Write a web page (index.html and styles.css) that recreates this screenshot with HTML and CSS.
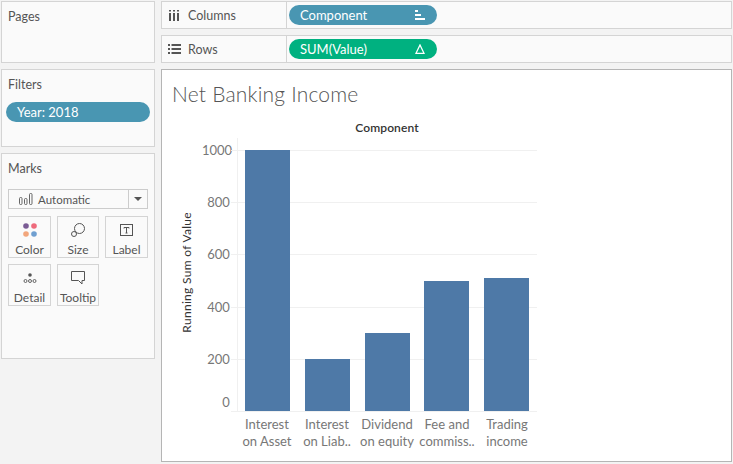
FILE: index.html
```html
<!DOCTYPE html>
<html lang="en">
<head>
    <meta charset="UTF-8">
    <title>Net Banking Income</title>
    <link rel="stylesheet" href="styles.css">
</head>
<body>
    <div class="workspace">
        <aside class="sidebar">
            <section class="card pages-card">
                <h4>Pages</h4>
            </section>
            <section class="card filters-card">
                <h4>Filters</h4>
                <div class="pill pill-blue filter-pill">Year: 2018</div>
            </section>
            <section class="card marks-card">
                <h4>Marks</h4>
                <div class="mark-select">
                    <svg class="mark-icon" width="14" height="12" viewBox="0 0 14 12"><g fill="none" stroke="#666" stroke-width="1"><rect x="0.5" y="4.5" width="2.500" height="7" rx="1"/><rect x="5.500" y="5.500" width="2.500" height="6" rx="1"/><rect x="10.500" y="0.500" width="2.500" height="11" rx="1"/></g></svg>
                    <span class="mark-name">Automatic</span>
                    <span class="mark-arrow"></span>
                </div>
                <div class="mark-grid">
                    <div class="mark-btn">
                        <svg width="14" height="14" viewBox="0 0 14 14"><circle cx="3" cy="3" r="2.800" fill="#7b5c95"/><circle cx="11" cy="3" r="2.800" fill="#ee6a7c"/><circle cx="3" cy="11" r="2.800" fill="#f2a67c"/><circle cx="11" cy="11" r="2.800" fill="#6f9fd0"/></svg>
                        <span>Color</span>
                    </div>
                    <div class="mark-btn">
                        <svg width="14" height="14" viewBox="0 0 14 14"><g fill="none" stroke="#555"><circle cx="8.500" cy="5.500" r="5"/><circle cx="3" cy="11" r="2.500" fill="#fafafa"/></g></svg>
                        <span>Size</span>
                    </div>
                    <div class="mark-btn">
                        <svg width="14" height="14" viewBox="0 0 14 14"><rect x="0.5" y="1.5" width="12" height="11" fill="none" stroke="#555"/><path d="M4 4.5H9M6.5 4.5V10M5.5 10H7.5M4 4.5V5.5M9 4.5V5.5" fill="none" stroke="#555"/></svg>
                        <span>Label</span>
                    </div>
                    <div class="mark-btn">
                        <svg width="14" height="14" viewBox="0 0 14 14"><circle cx="7" cy="4" r="1.800" fill="#555"/><g fill="none" stroke="#555" stroke-width="0.9"><circle cx="2.500" cy="10" r="1.500"/><circle cx="7" cy="10" r="1.500"/><circle cx="11.500" cy="10" r="1.500"/></g></svg>
                        <span>Detail</span>
                    </div>
                    <div class="mark-btn">
                        <svg width="14" height="14" viewBox="0 0 14 14"><path d="M0.500 0.500H13.500V9.500H11V13L7.500 9.500H0.500Z" fill="none" stroke="#555"/></svg>
                        <span>Tooltip</span>
                    </div>
                </div>
            </section>
        </aside>

        <main class="main">
            <div class="shelf">
                <div class="shelf-label">
                    <svg width="13" height="11" viewBox="0 0 13 11"><path d="M1 3H3V11H1ZM5 3H7V11H5ZM9 3H11V11H9ZM1 0H3V1.500H1ZM5 0H7V1.500H5ZM9 0H11V1.500H9Z" fill="#555"/></svg>
                    <span>Columns</span>
                </div>
                <div class="pill pill-blue shelf-pill">
                    <span>Component</span>
                    <svg width="10" height="10" viewBox="0 0 10 10"><path d="M0 0H3V2H0ZM0 4H6V6H0ZM0 8H10V10H0Z" fill="#fff"/></svg>
                </div>
            </div>
            <div class="shelf">
                <div class="shelf-label">
                    <svg width="13" height="10" viewBox="0 0 13 10"><path d="M0 0H2V2H0ZM3.500 0H13V2H3.500ZM0 4H2V6H0ZM3.500 4H13V6H3.500ZM0 8H2V10H0ZM3.500 8H13V10H3.500Z" fill="#555"/></svg>
                    <span>Rows</span>
                </div>
                <div class="pill pill-green shelf-pill">
                    <span>SUM(Value)</span>
                    <svg width="10" height="10" viewBox="0 0 10 10"><path d="M5 1L9 9.300H1Z" fill="none" stroke="#fff" stroke-width="1.300"/></svg>
                </div>
            </div>

            <section class="view">
                <h1 class="view-title">Net Banking Income</h1>
                <div class="chart">
                    <div class="chart-head">Component</div>
                    <div class="chart-body">
                        <div class="axis-title"><span>Running Sum of Value</span></div>
                        <div class="axis-ticks">
                            <span>1000</span><span>800</span><span>600</span><span>400</span><span>200</span><span class="tick-zero">0</span>
                        </div>
                        <div class="plot">
                            <div class="gridlines"><i></i><i></i><i></i><i></i><i></i><i></i></div>
                            <div class="bars">
                                <div class="bar-slot"><div class="bar" style="height: 261px"></div></div>
                                <div class="bar-slot"><div class="bar" style="height: 52px"></div></div>
                                <div class="bar-slot"><div class="bar" style="height: 78px"></div></div>
                                <div class="bar-slot"><div class="bar" style="height: 130px"></div></div>
                                <div class="bar-slot"><div class="bar" style="height: 133px"></div></div>
                            </div>
                        </div>
                    </div>
                    <div class="cats">
                        <div class="cat">Interest<br>on Asset</div>
                        <div class="cat">Interest<br>on Liab..</div>
                        <div class="cat">Dividend<br>on equity</div>
                        <div class="cat">Fee and<br>commiss..</div>
                        <div class="cat">Trading<br>income</div>
                    </div>
                </div>
            </section>
        </main>
    </div>
</body>
</html>
```

FILE: styles.css
```css
html, body {
    margin: 0;
    padding: 0;
    height: 100%;
}

body {
    background-color: #f3f3f3;
    color: #555;
    font-family: Lato, "Open Sans", sans-serif;
    font-size: 12px;
    overflow: hidden;
}

.workspace {
    display: flex;
    gap: 6px;
    padding: 1px 1px 2px 1px;
    height: 461px;
}

/* Left column */
.sidebar {
    display: flex;
    flex-direction: column;
    gap: 6px;
    width: 154px;
    flex: none;
}

.card {
    box-sizing: border-box;
    background-color: #fafafa;
    border: 1px solid #d4d4d4;
    padding: 0 6px;
}

.card h4 {
    margin: 0;
    font-size: 12.5px;
    font-weight: 400;
    line-height: 16px;
    color: #555;
}

.pages-card {
    height: 62px;
    padding-top: 7px;
}

.filters-card {
    height: 78px;
    padding-top: 7px;
}

.marks-card {
    height: 206px;
    padding-top: 7px;
}

.pill {
    display: flex;
    align-items: center;
    box-sizing: border-box;
    height: 20px;
    border-radius: 10px;
    color: #fff;
    font-size: 13px;
}

.pill-blue {
    background-color: #4996b2;
}

.pill-green {
    background-color: #00b180;
}

.filter-pill {
    margin: 9px 0 0 -2px;
    width: 144px;
    padding-left: 11px;
}

.mark-select {
    display: flex;
    align-items: center;
    box-sizing: border-box;
    width: 140px;
    height: 20px;
    margin-top: 12px;
    border: 1px solid #ccc;
    background-color: #fafafa;
    padding-left: 10px;
}

.mark-name {
    margin-left: 5px;
    flex: 1;
    font-size: 11.5px;
}

.mark-arrow {
    display: flex;
    align-items: center;
    justify-content: center;
    width: 18px;
    height: 100%;
    border-left: 1px solid #ccc;
}

.mark-arrow::after {
    content: "";
    border-left: 4px solid transparent;
    border-right: 4px solid transparent;
    border-top: 4px solid #555;
}

.mark-grid {
    display: grid;
    grid-template-columns: 43px 42px 43px;
    gap: 6px;
    margin-top: 7px;
}

.mark-btn {
    display: flex;
    flex-direction: column;
    align-items: center;
    justify-content: space-between;
    box-sizing: border-box;
    height: 42px;
    border: 1px solid #d4d4d4;
    padding: 6px 0 0;
    font-size: 12px;
    line-height: 15px;
}

/* Right column */
.main {
    display: flex;
    flex-direction: column;
    gap: 6px;
    flex: 1;
    min-width: 0;
}

.shelf {
    display: flex;
    align-items: center;
    box-sizing: border-box;
    height: 28px;
    background-color: #fafafa;
    border: 1px solid #d4d4d4;
}

.shelf-label {
    display: flex;
    align-items: center;
    gap: 7px;
    box-sizing: border-box;
    width: 125px;
    height: 100%;
    padding-left: 6px;
    border-right: 1px solid #d4d4d4;
    font-size: 12.5px;
}

.shelf-pill {
    justify-content: space-between;
    width: 148px;
    margin-left: 2px;
    padding: 0 12px 0 11px;
}

.view {
    flex: 1;
    box-sizing: border-box;
    background-color: #fff;
    border: 1px solid #b5b5b5;
    padding: 12px 0 0 10px;
}

.view-title {
    margin: 0;
    font-size: 21px;
    font-weight: 300;
    line-height: 24px;
    letter-spacing: 0.2px;
    color: #555;
}

.chart {
    margin-top: 15px;
    width: 365px;
}

.chart-head {
    margin-left: 65px;
    width: 300px;
    text-align: center;
    font-size: 12px;
    font-weight: 600;
    letter-spacing: 0.1px;
    line-height: 14px;
    color: #333;
}

.chart-body {
    display: flex;
    margin-top: 3px;
    height: 274px;
}

.axis-title {
    display: flex;
    align-items: center;
    justify-content: center;
    box-sizing: border-box;
    width: 30px;
    padding-bottom: 5px;
    font-size: 12px;
    letter-spacing: 0.3px;
    color: #333;
}

.axis-title span {
    writing-mode: vertical-rl;
    transform: rotate(180deg);
    white-space: nowrap;
}

.axis-ticks {
    box-sizing: border-box;
    width: 35px;
    padding: 4px 7px 0 0;
    text-align: right;
    font-size: 13px;
    line-height: 16px;
    color: #777;
}

.axis-ticks span {
    display: block;
    height: 52.2px;
}

.axis-ticks .tick-zero {
    margin-top: -9px;
}

.plot {
    position: relative;
    box-sizing: border-box;
    width: 301px;
    border-left: 1px solid #f0f0f0;
    border-bottom: 1px solid #ededed;
}

.gridlines {
    position: absolute;
    inset: 12px 0 -1px -7px;
    display: flex;
    flex-direction: column;
    justify-content: space-between;
}

.gridlines i {
    display: block;
    height: 1px;
    background-color: #f0f0f0;
}

.bars {
    position: relative;
    display: flex;
    height: 100%;
}

.bar-slot {
    display: flex;
    flex: 1;
    align-items: flex-end;
    padding-left: 7px;
}

.bar {
    width: 45px;
    background-color: #4e79a7;
}

.cats {
    display: flex;
    margin-left: 65px;
    width: 300px;
    margin-top: 4px;
}

.cat {
    flex: 1;
    text-align: center;
    font-size: 13px;
    line-height: 17px;
    color: #777;
    white-space: nowrap;
}
```
